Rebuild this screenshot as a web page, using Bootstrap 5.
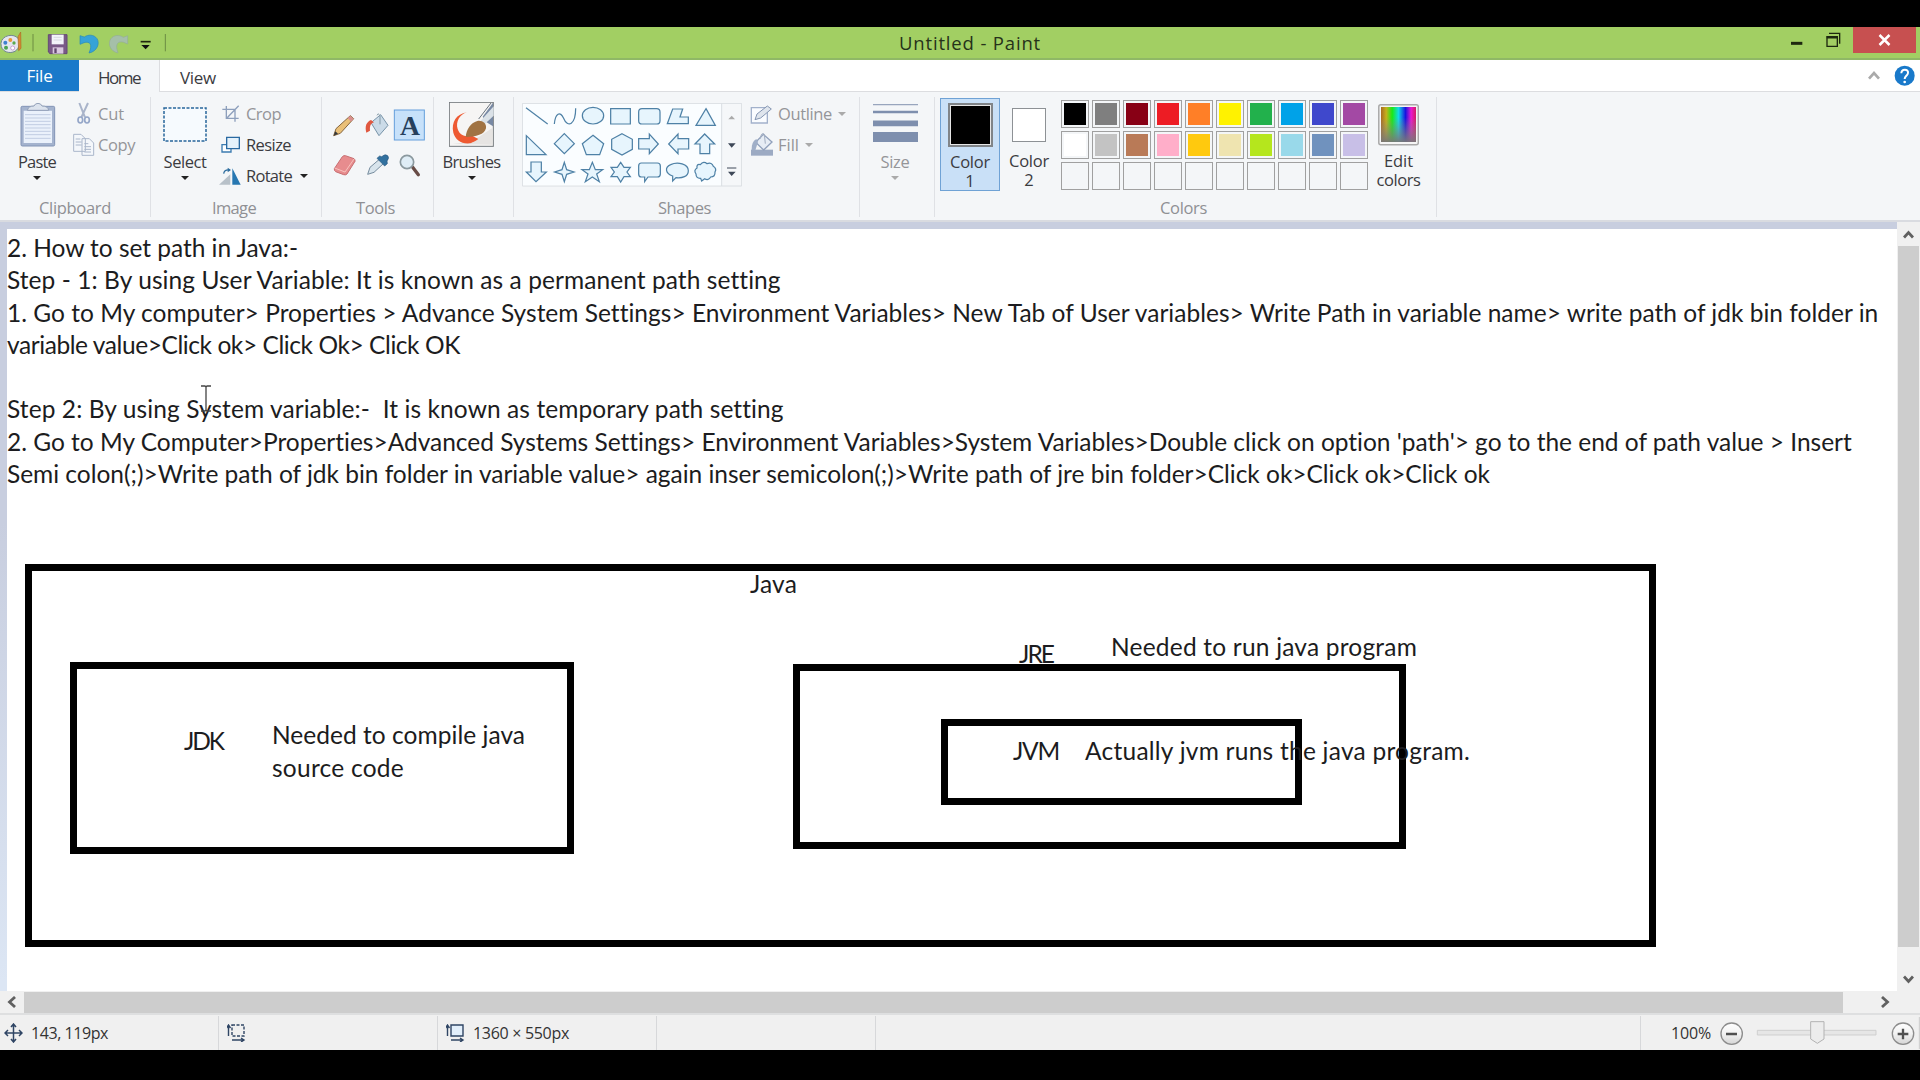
<!DOCTYPE html>
<html lang="en">
<head>
<meta charset="utf-8">
<title>Untitled - Paint</title>
<link href="https://cdn.jsdelivr.net/npm/bootstrap@5.3.0/dist/css/bootstrap.min.css" rel="stylesheet">
<style>
  body { width:1920px; height:1080px; overflow:hidden; background:#000; font-family:"Open Sans","Noto Sans",sans-serif; font-size:16.5px; line-height:20px; color:#3b3b3f; }
  svg { display:block; flex:none; }
  .fit { white-space:pre; display:inline-block; }
  .window { margin-top:27px; height:1023px; background:#f4f6f8; }
  .titlebar { height:33px; background:#a2cf63; border-bottom:2px solid #8fb866; color:#26321a; }
  .titlebar .caption { font-size:18.5px; width:880px; text-align:center; padding-top:6px; margin-left:355px; }
  .btn-close-win { width:63px; height:26px; background:#c75050; }
  .tabs { height:32px; background:#fff; border-bottom:1px solid #dcdde0; }
  .tab-item { height:32px; font-size:17px; }
  .tab-file { width:79px; height:31px; background:#1979ca; color:#fff; }
  .tab-home { width:81px; background:#f4f6f8; border-right:1px solid #dcdde0; }
  .tab-tools { margin-right:3px; }
  .ribbon { height:130px; border-bottom:2px solid #d9dbe0; padding-top:5px; }
  .group { height:120px; border-right:1px solid #dfe1e5; }
  .group-body { height:101px; }
  .group-label { color:#8f9094; height:20px; text-align:center; }
  .g-clipboard { width:151px; } .g-image { width:171px; } .g-tools { width:112px; } .g-brushes { width:80px; }
  .g-shapes { width:346px; } .g-size { width:75px; } .g-colors { width:502px; }
  .off { color:#949599; }
  .cmds { padding-top:1px; }
  .cmd { height:31px; }
  .big { height:94px; text-align:center; }
  .big .pic { height:55px; display:flex; align-items:center; justify-content:center; }
  .g-clipboard .big { width:74px; } .g-image .big { width:68px; } .g-brushes .big { width:75px; }
  .g-size .big { width:70px; } .g-colors .big { width:61px; }
  .arr { width:0; height:0; border:4px solid transparent; border-top:4.5px solid #222; border-bottom:0; display:inline-block; }
  .off .arr { border-top-color:#aaa; margin-left:6px; }
  .gallery { margin-top:6px; }
  .two-line { line-height:18.5px; height:18.5px; }
  .color-sel { width:60px; height:93px; background:#c9e0f7; border:1px solid #6fa2d5; margin:1px 0 0 5px; padding-top:4px; }
  .color-alt { width:58px; padding-top:11px; }
  .chip { width:45px; height:45px; border:2px solid #808488; background:#000; box-shadow:inset 0 0 0 1px #e6e6e6; margin-bottom:6px; }
  .chip2 { width:34px; height:34px; border:1.5px solid #8d9195; background:#fff; margin-bottom:10px; }
  .swatches { display:grid; grid-template-columns:repeat(10,28px); gap:3px; margin:3px 0 0 3px; }
  .sw { width:28px; height:28px; border:1px solid #a0a0a0; padding:2px; }
  .sw i { display:block; height:100%; }
  .work { height:769px; background:#c8cedf; }
  .stage { width:1897px; padding:7px 0 0 7px; background:linear-gradient(#c8cedf 0,#c8cedf 300px,#dce6f4 760px); }
  .sheet { position:relative; height:762px; background:#fff; font-family:Lato,"Open Sans",sans-serif; color:#1c1c20; font-size:24.5px; line-height:32.3px; }
  .sheet .fit { display:block; width:max-content; }
  .notes { padding-top:3px; }
  .frame { position:absolute; border:7px solid #000; }
  .lbl { position:absolute; }
  .vbar { width:23px; background:#f0f0f0; }
  .vbar .up, .vbar .down { height:24px; display:flex; justify-content:center; align-items:center; }
  .vbar .down { margin-top:20px; }
  .vthumb { height:701px; width:21px; margin-left:1px; background:#cdcdcd; }
  .hbar { height:22px; background:#f0f0f0; }
  .hthumb { width:1819px; height:21px; background:#cdcdcd; }
  .hright { margin-right:27px; }
  .status { height:37px; background:#f0f0f0; border-top:2px solid #dedfe0; font-size:16px; color:#333; }
  .status .fit { padding-top:1px; }
  .cell { width:219px; height:34px; border-right:1px solid #d7d8da; }
  .cell-wide { width:765px; }
  .zoom-label { padding-left:30px; }
</style>
</head>
<body>
<div class="window">
  <!-- title bar with quick access tools -->
  <div class="titlebar d-flex align-items-start">
    <svg width="175" height="31" viewBox="0 21 525 93">
      <path d="M4 80c-8-28 26-42 46-29 12 10 10 34-5 43-16 8-36 2-41-14z" fill="#e5e6ef" stroke="#71878e" stroke-width="3"/>
      <circle cx="16" cy="68" r="6" fill="#3f80d0"/><circle cx="31" cy="60" r="6" fill="#e89838"/><circle cx="42" cy="69" r="5" fill="#5ba94e"/><circle cx="18" cy="83" r="6" fill="#4aa552"/><circle cx="38" cy="84" r="6" fill="#fff" stroke="#718"/>
      <path d="M62 36 54 50 56 92 63 85z" fill="#db8a30" stroke="#a96b26" stroke-width="2"/>
      <path d="M99 42V94M496 42V94" stroke="#6c8c43" stroke-width="3"/>
      <path d="M145 44h56v57h-51l-5-5z" fill="#795987" stroke="#644a76" stroke-width="3"/><path d="M155 44h36v29h-36z" fill="#f3f4fa"/><path d="M161 52h24M161 60h24" stroke="#c8cbd6" stroke-width="2"/><path d="M158 82h32v19h-32z" fill="#d9c8e0"/><path d="M163 85h7v14h-7z" fill="#60456e"/>
      <path d="M240 47v26l12-5c17-5 27 4 15 31 25-5 33-29 24-43-9-13-27-13-38-5z" fill="#36a3d7" stroke="#2588b9" stroke-width="2"/>
      <path d="M332 47v25l12-5c17-5 27 4 17 32 24-5 31-28 22-42-9-13-27-13-38-5z" transform="translate(715 0) scale(-1 1)" fill="#a5bfa9" stroke="#94ad96" stroke-width="2"/>
      <path d="M422 65h30" stroke="#20270f" stroke-width="5"/><path d="M424 75h25l-12 13z" fill="#111"/>
    </svg>
    <div class="caption"><span class="fit" data-w="141">Untitled - Paint</span></div>
    <svg class="ms-auto" width="60" height="26" viewBox="145 21 180 78"><path d="M151 70h34" stroke="#1e2810" stroke-width="9"/><path d="M259 50h31v29h-31zM265 40h32v31" fill="none" stroke="#1e2810" stroke-width="4"/><path d="M258 52h34" stroke="#1e2810" stroke-width="7"/></svg>
    <div class="btn-close-win me-1 d-flex justify-content-center align-items-center ms-1"><svg width="13" height="12" viewBox="0 0 13 12"><path d="M1.500 1l10 10M11.500 1l-10 10" stroke="#fff" stroke-width="2.500"/></svg></div>
  </div>

  <div class="tabs d-flex">
    <div class="tab-item tab-file d-flex justify-content-center align-items-center"><span class="fit" data-w="25">File</span></div>
    <div class="tab-item tab-home d-flex justify-content-center align-items-center pt-1"><span class="fit" data-w="41">Home</span></div>
    <div class="tab-item d-flex align-items-center ps-3 ms-1 pt-1"><span class="fit" data-w="35">View</span></div>
    <svg class="ms-auto tab-tools" width="52" height="31" viewBox="374 117 156 93"><path d="m386 173 15-17 15 17" fill="none" stroke="#aaa" stroke-width="8"/><circle cx="493" cy="164" r="30" fill="#1979ca"/><path d="M483 157c0-15 22-14 20-1-1 8-10 9-10 18" fill="none" stroke="#fff" stroke-width="6"/><circle cx="493" cy="183" r="4" fill="#fff"/></svg>
  </div>

  <div class="ribbon d-flex">
    <div class="group g-clipboard">
      <div class="group-body d-flex">
        <div class="big">
          <div class="pic"><svg width="37" height="44" viewBox="58 246 111 132"><rect x="64" y="256" width="101" height="119" rx="4" fill="#a4b3ce" stroke="#8294b6" stroke-width="3"/><path d="M72 269h85v97H72z" fill="#eaf1fb"/><path d="M76 281h77M76 291h77M76 301h77M76 311h77M76 321h77M76 331h77M76 341h77M76 352h77" stroke="#c1cde2" stroke-width="3"/><path d="M83 268q3-13 20-13 3-8 12-8t12 8q18 0 20 13z" fill="#dce3ed" stroke="#93a1b8" stroke-width="3"/></svg></div>
          <div><span class="fit" data-w="37">Paste</span></div><div class="arr d-block mx-auto mt-1"></div>
        </div>
        <div class="off cmds">
          <div class="cmd d-flex align-items-center"><svg width="24" height="24" viewBox="218 246 72 72"><path d="M234 249l17 43M260 249l-20 43" stroke="#a9b4ca" stroke-width="6"/><ellipse cx="237" cy="300" rx="7" ry="9" fill="none" stroke="#94a6c8" stroke-width="5"/><ellipse cx="257" cy="300" rx="7" ry="9" fill="none" stroke="#94a6c8" stroke-width="5"/></svg><span class="fit" data-w="25">Cut</span></div>
          <div class="cmd d-flex align-items-center"><svg width="24" height="24" viewBox="218 340 72 72" overflow="visible"><g fill="#f4f7fb" stroke="#aab6ca" stroke-width="3"><path d="M217 344h22l13 13v38h-35zM242 357h22l13 13v37h-35z"/><path d="M223 358h14M223 367h18M223 376h18M249 372h12M249 381h20M249 389h20M249 397h20"/></g></svg><span class="fit" data-w="36">Copy</span></div>
        </div>
      </div>
      <div class="group-label"><span class="fit" data-w="71">Clipboard</span></div>
    </div>

    <div class="group g-image">
      <div class="group-body d-flex">
        <div class="big">
          <div class="pic"><svg width="44" height="36" viewBox="0 0 44 36"><rect x="1" y="1" width="42" height="33" fill="#f6fafe" stroke="#27659a" stroke-width="1.500" stroke-dasharray="3 1.500"/></svg></div>
          <div><span class="fit" data-w="42">Select</span></div><div class="arr d-block mx-auto mt-1"></div>
        </div>
        <div class="cmds">
          <div class="cmd d-flex align-items-center off"><svg width="27" height="22" viewBox="659 248 81 66"><path d="M681 257v37h37M669 267h38v37M682 294l36-38" fill="none" stroke="#8d9fbc" stroke-width="4"/></svg><span class="fit" data-w="34">Crop</span></div>
          <div class="cmd d-flex align-items-center"><svg width="27" height="22" viewBox="659 342 81 66"><path d="M668 374h27v22h-27z" fill="#fff" stroke="#3b7bb0" stroke-width="4"/><path d="M682 352h38v34h-38z" fill="#e4f1fb" stroke="#2969a1" stroke-width="4"/></svg><span class="fit" data-w="44">Resize</span></div>
          <div class="cmd d-flex align-items-center"><svg width="27" height="22" viewBox="659 434 81 66"><path d="M659 493l34-31v31z" fill="#b8c1c9"/><path d="M699 444l25 49h-25z" fill="#2777b1"/><path d="M673 460q2-13 18-11" fill="none" stroke="#2f6e9f" stroke-width="4"/><path d="M685 442l10 7-10 7z" fill="#2f6e9f"/></svg><span class="fit" data-w="45">Rotate</span><span class="arr ms-2"></span></div>
        </div>
      </div>
      <div class="group-label pe-1"><span class="fit" data-w="43">Image</span></div>
    </div>

    <div class="group g-tools">
      <div class="group-body pt-2">
        <svg width="104" height="86" viewBox="5 46 312 258">
          <rect x="222" y="61" width="90" height="90" fill="#c7e1fa" stroke="#649edb" stroke-width="3"/>
          <path d="M40 138l7-21 43-39 10 9-40 44z" fill="#eac078" stroke="#85653d" stroke-width="3"/><path d="M82 85l8-7 10 9-8 9z" fill="#d99090"/><path d="M40 138l5-13 8 7z" fill="#33373b"/>
          <path d="M152 99l29-24 22 32-27 31z" fill="#cbdbe8" stroke="#7894a9" stroke-width="3"/><path d="M170 77q4-9 9 2v25" fill="none" stroke="#8299a6" stroke-width="3"/><path d="M138 129c-5-20 0-32 14-38l9 7c-11 4-13 12-12 25z" fill="#e05840"/>
          <text x="269" y="135" text-anchor="middle" font-family="Liberation Serif,serif" font-size="83" font-weight="700" fill="#263f5c">A</text>
          <path d="M42 237l24-36q4-4 9-3l26 9q4 3 3 8l-24 38q-4 4-10 2l-24-9q-5-3-4-9z" fill="#e78c8e" stroke="#c76d70" stroke-width="3"/><path d="M43 235l31 12 27-39" fill="none" stroke="#f8c2bd" stroke-width="3"/>
          <path d="M142 254l7-21 28-24 13 12-29 27z" fill="#d8e4ec" stroke="#768c9e" stroke-width="3"/><path d="M170 206l8-7 6 2q11-10 18-3 6 6-2 16l1 8-8 7z" fill="#32719f" stroke="#285880" stroke-width="2"/>
          <path d="M277 233l17 22" stroke="#684c46" stroke-width="10" stroke-linecap="round"/><circle cx="260" cy="217" r="20" fill="#dfedf6" stroke="#8b999f" stroke-width="5"/>
        </svg>
      </div>
      <div class="group-label pe-1"><span class="fit" data-w="38">Tools</span></div>
    </div>

    <div class="group g-brushes">
      <div class="big">
        <div class="pic"><svg width="45" height="45" viewBox="390 39 135 135"><rect x="391" y="40" width="132" height="132" fill="#f6f5f4" stroke="#75797d" stroke-width="3"/><path d="M400 165l60-8 60-40v50z" fill="#e6e4e2"/><path d="M443 70c-20 6-34 28-27 50 5 16 18 22 34 22l8 20c-28 6-49-9-55-31-7-32 10-56 40-61z" fill="#ee5a32"/><path d="M522 41v71l-24-15-7-14z" fill="#7889a4"/><path d="M524 52l-39 43 10 12 29-27z" fill="#dae1e7"/><path d="M430 156q22 14 48-6l-30-16z" fill="#ee5a32"/><path d="M440 144c2-22 14-42 35-48 14-3 28 6 26 22-4 18-30 26-61 26z" fill="#a17343"/><path d="M516 42l-37 48" stroke="#67717c" stroke-width="3"/></svg></div>
        <div><span class="fit" data-w="57">Brushes</span></div><div class="arr d-block mx-auto mt-1"></div>
      </div>
    </div>

    <div class="group g-shapes">
      <div class="group-body d-flex ps-2">
        <!-- shape gallery -->
        <svg class="gallery" width="220" height="84" viewBox="36 40 660 252">
          <path d="M37 41h658v248H37z" fill="#f5f7f9" stroke="#dadee2" stroke-width="3"/><path d="M39 43h595v244H39z" fill="#fafdff"/><path d="M635 41v248" stroke="#dadee2" stroke-width="3"/>
          <g fill="#e7f5fd" stroke="#4e81a6" stroke-width="3.700">
            <path d="M48 54l65 49"/><path d="M133 103c3-34 18-38 27-19 14 34 37 20 37-28" fill="none"/><ellipse cx="249" cy="78" rx="32" ry="25"/><path d="M302 57h59v46h-59z"/><rect x="386" y="57" width="64" height="46" rx="10"/><path d="M488 58h30l-8 24h25v20h-63z"/><path d="M588 57l28 50h-58z"/>
            <path d="M49 138v57h59z"/><path d="M163 132l30 30-30 30-30-30z"/><path d="M249 137l32 25-12 33h-40l-12-33z"/><path d="M336 132l31 17v30l-31 17-31-17v-30z"/><path d="M386 147h32v-14l27 30-27 29v-14h-32z"/><path d="M536 147h-32v-14l-28 30 28 29v-14h32z"/><path d="M584 133l30 30h-15v29h-29v-29h-15z"/>
            <path d="M63 217h31v30h15l-31 29-29-29h14z"/><path d="M163 218l7 22 22 7-22 7-7 22-7-22-22-7 22-7z"/><path d="M247 218l9 22h22l-18 13 8 23-21-14-21 14 8-23-18-13h22z"/><path d="M332 218l10 15h19l-10 14 10 14h-19l-10 16-10-16h-19l10-14-10-14h19z"/><path d="M394 220h48q9 0 9 9v24q0 9-9 9h-28l-10 14v-14h-10q-8 0-8-9v-24q0-9 8-9z"/><path d="M488 259c-22-8-25-26-6-34 21-10 53-2 53 18 0 18-19 23-37 21l-10 10z"/><path d="M571 225q10-12 20-3 15-5 19 8 11 7 5 17 1 15-13 15-7 12-18 5l-9 7-3-8q-14 1-14-13-8-11 3-18-2-13 10-10z"/>
          </g>
          <path d="M655 89l10-11 10 11z" fill="#aaa"/><path d="M654 161h23l-12 13zM654 246h23l-12 13z" fill="#3e4858"/><path d="M651 235h28" stroke="#3e4858" stroke-width="3"/>
        </svg>
        <div class="off ps-2 cmds">
          <div class="cmd d-flex align-items-center"><svg width="28" height="24" viewBox="720 40 84 72"><path d="M724 57h48v46h-48z" fill="#fafcff" stroke="#a2b1cb" stroke-width="4"/><path d="M735 93l6-17 31-24 12 9-32 27z" fill="#dfe5ed" stroke="#8596b2" stroke-width="3"/></svg><span class="fit" data-w="53">Outline</span><span class="arr"></span></div>
          <div class="cmd d-flex align-items-center"><svg width="28" height="24" viewBox="720 130 84 72"><path d="M723 180h66v18h-66z" fill="#9caac3"/><path d="M737 158l23-24 26 23-25 24z" fill="#e7edf5" stroke="#91a1bc" stroke-width="4"/><path d="M725 182q-2-25 14-34l5 8-8 26z" fill="#a0afc8"/><path d="M751 147q3-21 12-13l3 28" fill="none" stroke="#a2aec1" stroke-width="3"/></svg><span class="fit" data-w="20">Fill</span><span class="arr"></span></div>
        </div>
      </div>
      <div class="group-label pe-1"><span class="fit" data-w="52">Shapes</span></div>
    </div>

    <div class="group off g-size">
      <div class="big">
        <div class="pic"><svg width="45" height="45" viewBox="39 37 135 135"><path d="M39 45h135" stroke="#98a5bd" stroke-width="4"/><path d="M39 67h135" stroke="#7e8fae" stroke-width="8"/><path d="M39 101h135" stroke="#7e8fae" stroke-width="17"/><path d="M39 142h135" stroke="#7e8fae" stroke-width="30"/></svg></div>
        <div><span class="fit" data-w="28">Size</span></div><div class="arr d-block mx-auto mt-1"></div>
      </div>
    </div>

    <div class="group g-colors">
      <div class="group-body d-flex">
        <div class="color-sel d-flex flex-column align-items-center"><div class="chip"></div><div class="two-line"><span class="fit" data-w="39">Color</span></div><div class="two-line">1</div></div>
        <div class="color-alt d-flex flex-column align-items-center"><div class="chip2"></div><div class="two-line"><span class="fit" data-w="39">Color</span></div><div class="two-line">2</div></div>
        <div class="swatches align-self-start" id="swatches"></div>
        <div class="big">
          <div class="pic"><svg width="41" height="42" viewBox="0 0 41 42"><defs><linearGradient id="hue"><stop offset="0" stop-color="#a96a22"/><stop offset=".15" stop-color="#c6b01d"/><stop offset=".32" stop-color="#19ea16"/><stop offset=".5" stop-color="#12d9e8"/><stop offset=".7" stop-color="#1913df"/><stop offset=".86" stop-color="#e919d0"/><stop offset="1" stop-color="#d51c63"/></linearGradient><linearGradient id="fade" x2="0" y2="1"><stop offset=".3" stop-color="#888" stop-opacity="0"/><stop offset="1" stop-color="#777" stop-opacity=".95"/></linearGradient></defs><rect x=".8" y=".8" width="39.500" height="40" rx="2" fill="#f5f5f5" stroke="#a9a9a9" stroke-width="1.500"/><path d="M3 3h35v35H3z" fill="url(#hue)"/><path d="M3 3h35v35H3z" fill="url(#fade)"/></svg></div>
          <div class="two-line"><span class="fit" data-w="28">Edit</span></div><div class="two-line"><span class="fit" data-w="43">colors</span></div>
        </div>
      </div>
      <div class="group-label pe-1"><span class="fit" data-w="46">Colors</span></div>
    </div>
  </div>

  <div class="work d-flex">
    <div class="stage">
      <div class="sheet">
        <div class="notes">
          <span class="fit" data-w="290">2. How to set path in Java:-</span>
          <span class="fit" data-w="772">Step - 1: By using User Variable: It is known as a permanent path setting</span>
          <span class="fit" data-w="1870">1. Go to My computer&gt; Properties &gt; Advance System Settings&gt; Environment Variables&gt; New Tab of User variables&gt; Write Path in variable name&gt; write path of jdk bin folder in</span>
          <span class="fit" data-w="452">variable value&gt;Click ok&gt; Click Ok&gt; Click OK</span>
          <br>
          <span class="fit" data-w="775">Step 2: By using System variable:-  It is known as temporary path setting</span>
          <span class="fit" data-w="1844">2. Go to My Computer&gt;Properties&gt;Advanced Systems Settings&gt; Environment Variables&gt;System Variables&gt;Double click on option 'path'&gt; go to the end of path value &gt; Insert</span>
          <span class="fit" data-w="1482">Semi colon(;)&gt;Write path of jdk bin folder in variable value&gt; again inser semicolon(;)&gt;Write path of jre bin folder&gt;Click ok&gt;Click ok&gt;Click ok</span>
        </div>
        <!-- diagram drawn on the canvas -->
        <div class="frame" style="left:18px;top:335px;width:1631px;height:383px"></div>
        <div class="frame" style="left:63px;top:433px;width:504px;height:192px"></div>
        <div class="frame" style="left:786px;top:435px;width:613px;height:185px"></div>
        <div class="frame" style="left:934px;top:490px;width:361px;height:86px"></div>
        <span class="lbl fit" style="left:743px;top:339px" data-w="46">Java</span>
        <span class="lbl fit" style="left:1012px;top:409px" data-w="33">JRE</span>
        <span class="lbl fit" style="left:1104px;top:402px" data-w="305">Needed to run java program</span>
        <span class="lbl fit" style="left:1006px;top:506px" data-w="45">JVM</span>
        <span class="lbl fit" style="left:1078px;top:506px" data-w="384">Actually jvm runs the java program.</span>
        <span class="lbl fit" style="left:177px;top:496px" data-w="38">JDK</span>
        <span class="lbl fit" style="left:265px;top:490px" data-w="252">Needed to compile java</span>
        <span class="lbl fit" style="left:265px;top:523px" data-w="131">source code</span>
        <svg class="lbl" style="left:192px;top:156px" width="14" height="27" viewBox="0 0 14 27"><path d="M2 1h4l1 1 1-1h4M7 2v23M2 26h4l1-1 1 1h4" fill="none" stroke="#444" stroke-width="1.300"/></svg>
      </div>
    </div>
    <div class="vbar">
      <div class="up"><svg width="11" height="9" viewBox="0 0 11 9"><path d="M1 7.500l4.500-5 4.500 5" fill="none" stroke="#606060" stroke-width="2.800"/></svg></div>
      <div class="vthumb"></div>
      <div class="down"><svg width="11" height="9" viewBox="0 0 11 9"><path d="M1 1.500l4.500 5 4.500-5" fill="none" stroke="#606060" stroke-width="2.800"/></svg></div>
    </div>
  </div>

  <div class="hbar d-flex align-items-center">
    <svg width="24" height="12" viewBox="0 0 24 12"><path d="M15 1L9.500 6l5.500 5" fill="none" stroke="#606060" stroke-width="2.800"/></svg>
    <div class="hthumb"></div>
    <svg class="ms-auto hright" width="16" height="12" viewBox="0 0 16 12"><path d="M5 1l5.500 5L5 11" fill="none" stroke="#606060" stroke-width="2.800"/></svg>
  </div>

  <div class="status d-flex align-items-center">
    <div class="cell d-flex align-items-center gap-2 ps-1"><svg width="19" height="20" viewBox="0 0 19 20"><path d="M9.500 1v18M1 10h17M7 4l2.500-3L12 4M7 16l2.500 3 2.500-3M4 7l-3 3 3 3M15 7l3 3-3 3" fill="none" stroke="#2f4564" stroke-width="1.500"/></svg><span class="fit" data-w="76">143, 119px</span></div>
    <div class="cell d-flex align-items-center ps-2"><svg width="19" height="18" viewBox="1 0 19 18"><path d="M2.500 1v11M.5 4l2-3 2 3M6 16h12M15 14l3 2-3 2" fill="none" stroke="#2f4564" stroke-width="1.400"/><path d="M6 1h12v11H6z" fill="none" stroke="#2f4564" stroke-width="1.400" stroke-dasharray="3 1.500"/></svg></div>
    <div class="cell d-flex align-items-center ps-2 gap-2"><svg width="19" height="18" viewBox="1 0 19 18"><path d="M2.500 1v11M.5 4l2-3 2 3M6 16h12M15 14l3 2-3 2" fill="none" stroke="#2f4564" stroke-width="1.400"/><path d="M6 1h12v11H6z" fill="#e2effb" stroke="#2f4564" stroke-width="1.400"/></svg><span class="fit" data-w="95">1360 × 550px</span></div>
    <div class="cell"></div>
    <div class="cell cell-wide"></div>
    <div class="zoom-label"><span class="fit" data-w="39">100%</span></div>
    <svg class="ms-auto" width="205" height="32" viewBox="345 262 615 96"><defs><linearGradient id="metal" x2="0" y2="1"><stop stop-color="#fff"/><stop offset=".5" stop-color="#f2f2f2"/><stop offset="1" stop-color="#d5d5d5"/></linearGradient></defs><g fill="url(#metal)" stroke="#8c8c8c" stroke-width="4"><circle cx="395" cy="312" r="32"/><circle cx="909" cy="312" r="32"/></g><path d="M378 313h33M893 313h32M909 297v32" stroke="#505050" stroke-width="7"/><path d="M472 302h356v14H472z" fill="#e6e6e6" stroke="#cfcfcf" stroke-width="3"/><path d="M632 276h40v52l-20 13-20-13z" fill="#ececec" stroke="#b2b2b2" stroke-width="3"/><path d="M958 262v96" stroke="#ccc" stroke-width="3"/></svg>
  </div>
</div>
<script src="https://cdn.jsdelivr.net/npm/bootstrap@5.3.0/dist/js/bootstrap.bundle.min.js"></script>
<script>
  // palette cells: two filled rows, one empty row
  var colors = ['#000','#7f7f7f','#880015','#ed1c24','#ff7f27','#fff200','#22b14c','#00a2e8','#3f48cc','#a349a4',
                '#fff','#c3c3c3','#b97a57','#ffaec9','#ffc90e','#efe4b0','#b5e61d','#99d9ea','#7092be','#c8bfe7'];
  var box = document.getElementById('swatches');
  for (var i = 0; i < 30; i++) {
    var cell = document.createElement('div'); cell.className = 'sw';
    var fill = document.createElement('i'); fill.style.background = colors[i] || 'transparent';
    cell.appendChild(fill); box.appendChild(cell);
  }
  // track each text run to its intended width
  document.querySelectorAll('.fit').forEach(function (el) {
    var w = el.getBoundingClientRect().width;
    el.style.letterSpacing = ((+el.dataset.w + 1 - w) / el.textContent.length) + 'px';
  });
</script>
</body>
</html>
